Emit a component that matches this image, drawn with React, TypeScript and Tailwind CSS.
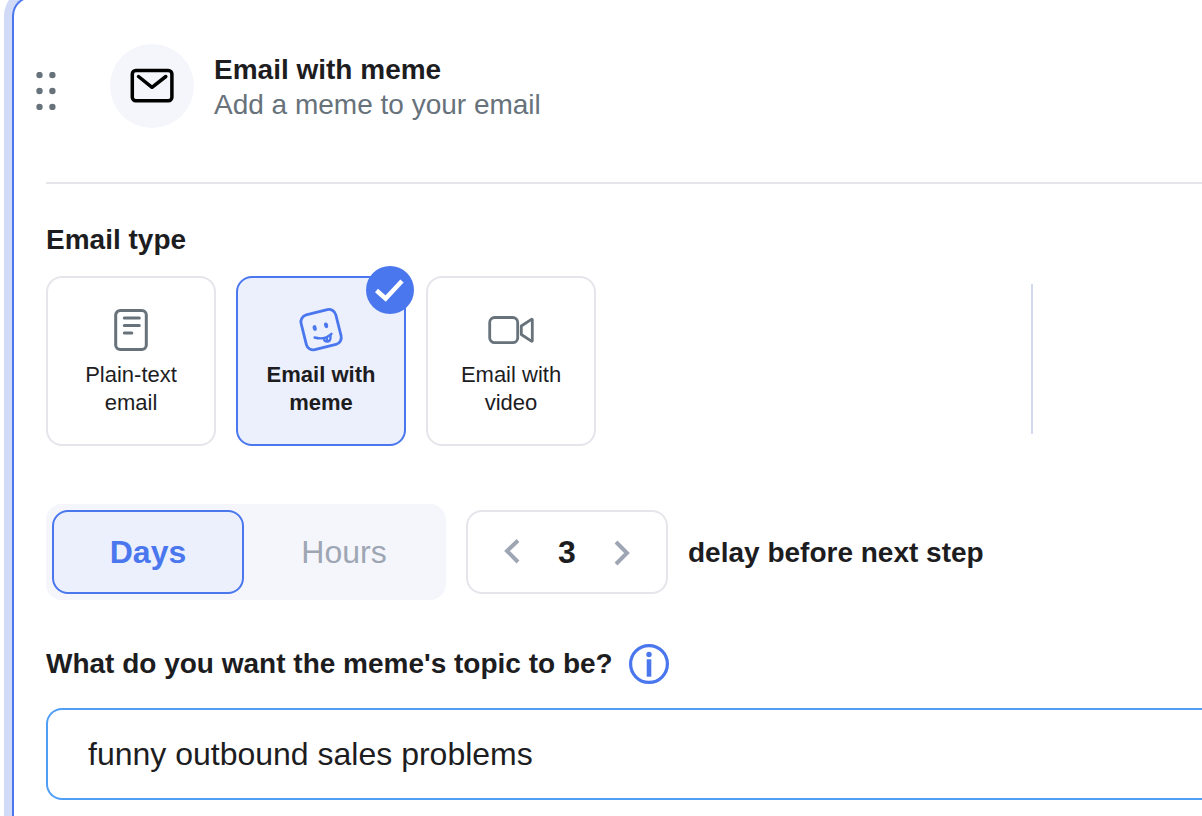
import { useState } from "react";

type EmailType = "text" | "meme" | "video";

function DocumentIcon() {
  return (
    <svg className="h-12 w-12" viewBox="0 0 48 48" fill="none" stroke="#67727b" strokeWidth="3" strokeLinecap="round" aria-hidden="true">
      <rect x="8.700" y="4.500" width="30.600" height="39" rx="4.500" />
      <path d="M17.300 12h15M17.300 19.500h15M17.300 27h7.500" />
    </svg>
  );
}

function MemeIcon() {
  return (
    <svg className="h-12 w-12" viewBox="0 0 48 48" fill="none" stroke="#4a77ee" strokeLinecap="round" strokeLinejoin="round" aria-hidden="true">
      <rect x="6.200" y="5.800" width="35.800" height="35.800" rx="7" strokeWidth="2.800" transform="rotate(-14 24.100 23.700)" />
      <ellipse cx="17.700" cy="22" rx="2" ry="2.900" fill="#4a77ee" stroke="none" transform="rotate(-14 17.700 22)" />
      <ellipse cx="29.100" cy="19.300" rx="2" ry="2.900" fill="#4a77ee" stroke="none" transform="rotate(-14 29.100 19.300)" />
      <path d="M17.600 31.500c5.500 1.600 12.300.600 16.900-3.700" strokeWidth="2.400" />
      <path d="M26.900 32.300c.3 4.300 6.400 4.600 6.600-.4v-2.600M29.700 31.800l.4 1.700" strokeWidth="2.300" />
    </svg>
  );
}

function VideoIcon() {
  return (
    <svg className="h-12 w-12" viewBox="0 0 48 48" fill="none" stroke="#67727b" strokeWidth="2.800" strokeLinejoin="round" aria-hidden="true">
      <rect x="2.700" y="11.500" width="28" height="25.200" rx="5" />
      <path d="M45.300 13.700v21c0 .5-.5.700-.9.400L34.300 28.500V20l10.100-6.700c.4-.3.900 0 .9.400z" />
    </svg>
  );
}

const emailTypes = [
  { id: "text" as EmailType, lines: ["Plain-text", "email"], Icon: DocumentIcon },
  { id: "meme" as EmailType, lines: ["Email with", "meme"], Icon: MemeIcon },
  { id: "video" as EmailType, lines: ["Email with", "video"], Icon: VideoIcon },
];

export default function App() {
  const [type, setType] = useState<EmailType>("meme");
  const [unit, setUnit] = useState("Days");
  const [delay, setDelay] = useState(3);
  const [topic, setTopic] = useState("funny outbound sales problems");

  return (
    <div className="flex min-h-screen overflow-hidden bg-white pl-3 font-['Helvetica_Neue','Liberation_Sans',sans-serif] text-[#1d1d1f]">
      <main className="-mt-1 min-w-0 flex-1 rounded-tl-[20px] border-t-2 border-l-2 border-[#4a77ee] pt-[46px] pl-8 ring-8 ring-[#d1dbf8]">
        <header className="-ml-2.5 flex items-start">
          <button type="button" aria-label="Reorder step" className="mt-7 cursor-grab">
            <svg className="h-[38px] w-5" viewBox="0 0 20 38" fill="#67727b" aria-hidden="true">
              <circle cx="3.500" cy="3" r="3.200" />
              <circle cx="16.400" cy="3" r="3.200" />
              <circle cx="3.500" cy="19" r="3.200" />
              <circle cx="16.400" cy="19" r="3.200" />
              <circle cx="3.500" cy="35" r="3.200" />
              <circle cx="16.400" cy="35" r="3.200" />
            </svg>
          </button>
          <div className="ml-[54px] flex h-[84px] w-[84px] shrink-0 items-center justify-center rounded-full bg-[#f5f6fb]">
            <svg className="h-12 w-12" viewBox="0 0 48 48" fill="none" stroke="#000" strokeWidth="3.500" strokeLinecap="round" strokeLinejoin="round" aria-hidden="true">
              <rect x="4.300" y="8.500" width="39.600" height="30.200" rx="3.500" />
              <path d="M10.500 14.500 24 25.300 37.800 14.500" />
            </svg>
          </div>
          <div className="ml-5 pt-2">
            <h1 className="text-[28px] leading-[35px] font-bold">Email with meme</h1>
            <p className="text-[28px] leading-[35px] text-[#67727b]">Add a meme to your email</p>
          </div>
        </header>

        <hr className="mt-[54px] border-t-2 border-[#e5e6eb]" />

        <h2 id="type-heading" className="mt-9 text-[28px] leading-10 font-bold">Email type</h2>
        <div className="mt-4 flex items-start">
          <div role="group" aria-labelledby="type-heading" className="flex gap-5">
            {emailTypes.map(({ id, lines, Icon }) => {
              const selected = id === type;
              return (
                <button
                  key={id}
                  type="button"
                  aria-pressed={selected}
                  onClick={() => setType(id)}
                  className={`relative flex h-[170px] w-[170px] flex-col items-center rounded-2xl border-2 pt-7 text-[22px] leading-7 ${
                    selected ? "border-[#4a77ee] bg-[#ecf0fd] font-bold" : "border-[#e5e6eb] bg-white"
                  }`}
                >
                  <Icon />
                  <span className="mt-[7px] flex flex-col">
                    <span>{lines[0]} </span>
                    <span>{lines[1]}</span>
                  </span>
                  {selected && (
                    <span className="absolute -top-3 -right-2.5 h-12 w-12 rounded-full bg-[#4a77ee]">
                      <svg viewBox="0 0 48 48" fill="none" stroke="#fff" strokeWidth="4.500" aria-hidden="true">
                        <path d="M10.500 24.500 19.600 32.500 36 15" />
                      </svg>
                    </span>
                  )}
                </button>
              );
            })}
          </div>
          <div className="mt-2 mr-[169px] ml-auto h-[150px] w-0.5 bg-[#d0daec]" />
        </div>

        <div className="mt-[58px] flex items-center gap-5">
          <div role="group" aria-label="Delay unit" className="flex w-[400px] rounded-2xl bg-[#f5f6fb] p-1.5">
            {["Days", "Hours"].map((name) => (
              <button
                key={name}
                type="button"
                aria-pressed={unit === name}
                onClick={() => setUnit(name)}
                className={`h-[84px] text-[32px] ${
                  unit === name
                    ? "w-48 rounded-2xl border-2 border-[#4a77ee] bg-[#ecf0fd] font-bold text-[#4a77ee]"
                    : "flex-1 pl-1 text-[#9ea6b4]"
                }`}
              >
                {name}
              </button>
            ))}
          </div>
          <div className="flex h-[84px] w-[202px] items-center justify-between rounded-2xl border-2 border-[#e5e6eb] px-8">
            <button type="button" aria-label="Decrease delay" onClick={() => setDelay(Math.max(0, delay - 1))}>
              <svg className="h-7 w-6" viewBox="0 0 24 28" fill="none" stroke="#9ea6b4" strokeWidth="4" aria-hidden="true">
                <path d="M18 2.500 7 13 18 24" />
              </svg>
            </button>
            <output className="text-[32px] font-bold">{delay}</output>
            <button type="button" aria-label="Increase delay" onClick={() => setDelay(delay + 1)}>
              <svg className="h-7 w-6" viewBox="0 0 24 28" fill="none" stroke="#9ea6b4" strokeWidth="4" aria-hidden="true">
                <path d="M6 4 17 15 6 26" />
              </svg>
            </button>
          </div>
          <span className="pt-0.5 text-[28px] leading-10 font-bold">delay before next step</span>
        </div>

        <div className="mt-11 flex items-center gap-4">
          <label htmlFor="topic" className="text-[28px] leading-10 font-bold">
            What do you want the meme's topic to be?
          </label>
          <button type="button" aria-label="More information">
            <svg className="h-10 w-10" viewBox="0 0 40 40" fill="none" aria-hidden="true">
              <circle cx="20" cy="20" r="18.400" stroke="#4a77ee" strokeWidth="3.200" />
              <circle cx="20" cy="10.500" r="2.700" fill="#4a77ee" />
              <path d="M20 15.300v17.400" stroke="#4a77ee" strokeWidth="4.600" />
            </svg>
          </button>
        </div>
        <input
          id="topic"
          type="text"
          value={topic}
          onChange={(event) => setTopic(event.target.value)}
          className="mt-6 block h-[92px] w-full rounded-l-2xl border-2 border-r-0 border-[#509ef6] bg-white px-10 text-[32px] outline-none"
        />
      </main>
    </div>
  );
}
